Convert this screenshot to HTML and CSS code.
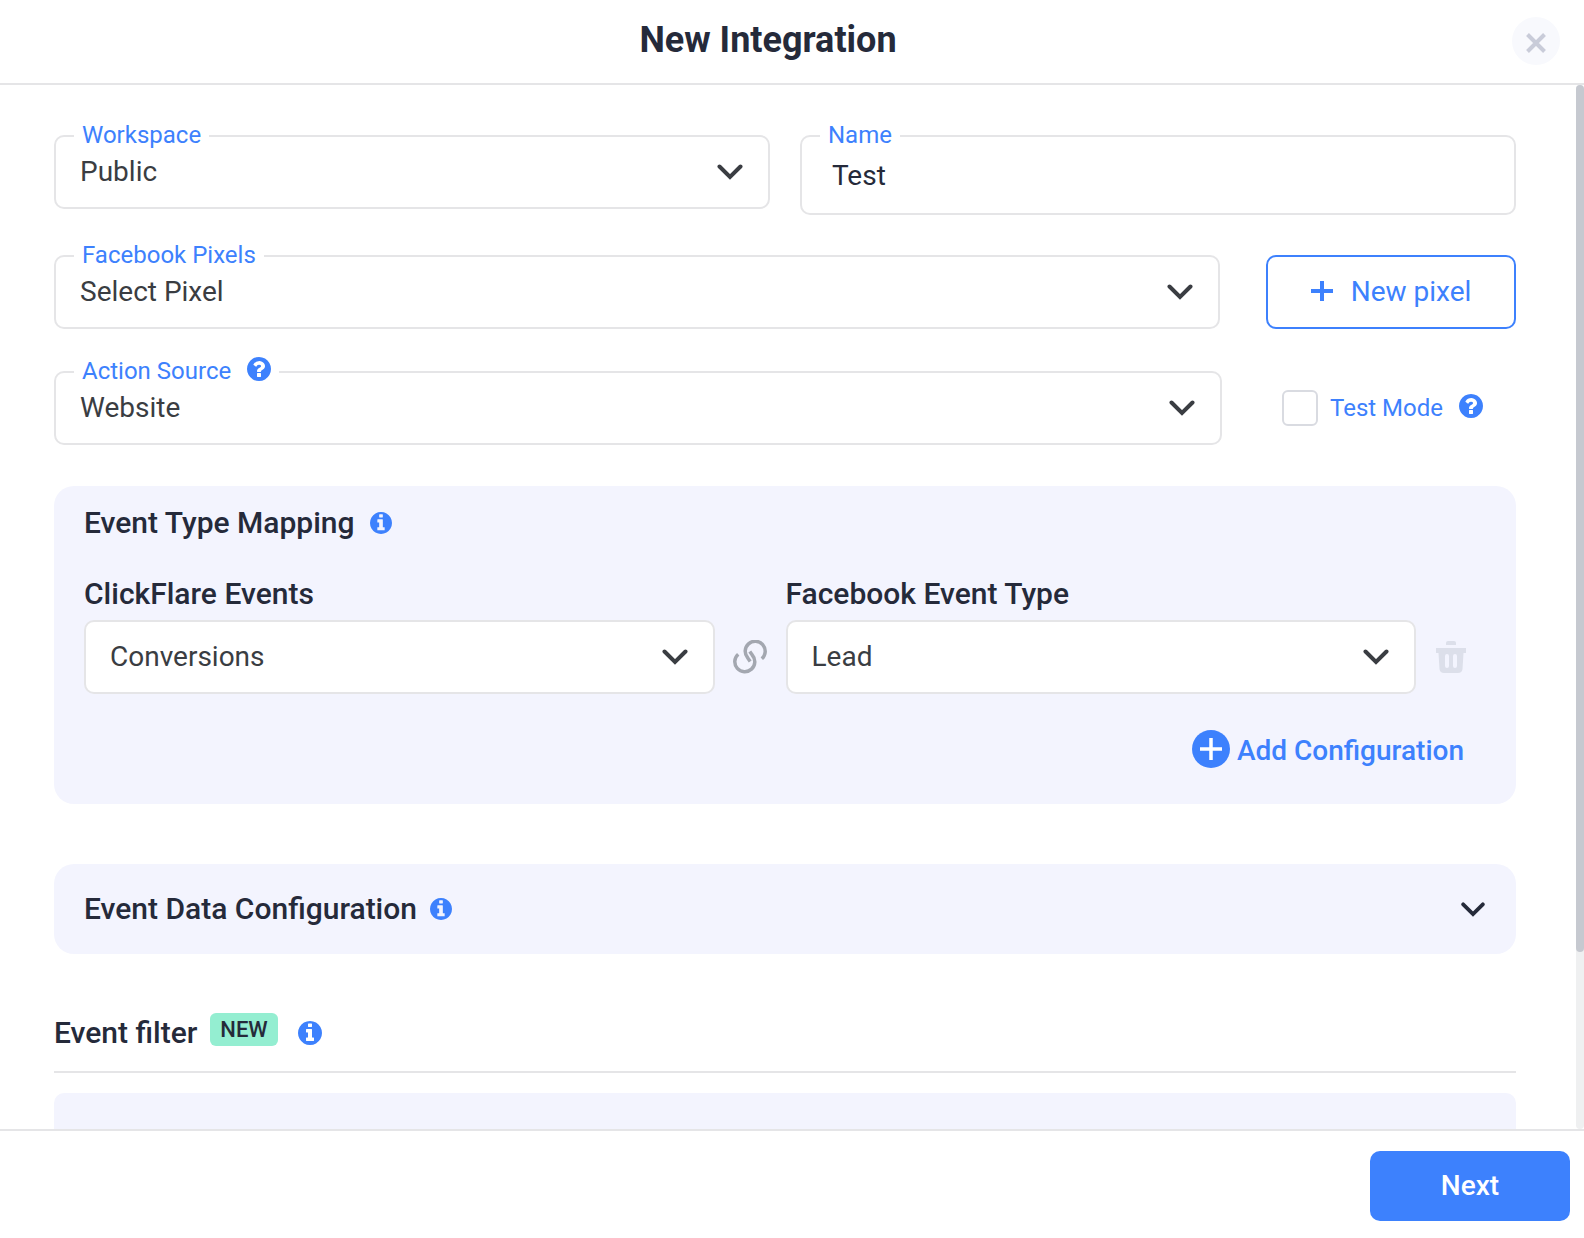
FILE: index.html
```html
<!DOCTYPE html>
<html lang="en">
<head>
<meta charset="utf-8">
<meta name="viewport" content="width=device-width, initial-scale=1">
<title>New Integration</title>
<link rel="stylesheet" href="styles.css">
</head>
<body>
<svg class="sprite" aria-hidden="true">
  <symbol id="chevron" viewBox="0 0 26 16"><path d="M2.500 2.500 13 13 23.500 2.500" fill="none" stroke="currentColor" stroke-width="4" stroke-linecap="round"/></symbol>
  <symbol id="info" viewBox="0 0 1536 1536"><path fill="currentColor" d="M1024 1248v-160q0-14-9-23t-23-9h-96v-512q0-14-9-23t-23-9h-320q-14 0-23 9t-9 23v160q0 14 9 23t23 9h96v320h-96q-14 0-23 9t-9 23v160q0 14 9 23t23 9h448q14 0 23-9t9-23zM896 352v-160q0-14-9-23t-23-9h-192q-14 0-23 9t-9 23v160q0 14 9 23t23 9h192q14 0 23-9t9-23zM1536 768q0 209-103 385.500t-279.500 279.500-385.500 103-385.500-103-279.500-279.500-103-385.500 103-385.500 279.500-279.500 385.500-103 385.500 103 279.500 279.500 103 385.500z"/></symbol>
  <symbol id="question" viewBox="0 0 1536 1536"><path fill="currentColor" d="M896 1248v-192q0-14-9-23t-23-9h-192q-14 0-23 9t-9 23v192q0 14 9 23t23 9h192q14 0 23-9t9-23zM1152 576q0-88-55.500-163t-138.500-116-170-41q-243 0-371 213-15 24 8 42l132 100q7 6 19 6 16 0 25-12 53-68 86-92 34-24 86-24 48 0 85.500 26t37.500 59q0 38-20 61t-68 45q-63 28-115.500 86.500t-52.500 125.500v36q0 14 9 23t23 9h192q14 0 23-9t9-23q0-19 21.500-49.500t54.500-49.500q32-18 49-28.500t46-35 44.500-48 28-60.500 12.500-81zM1536 768q0 209-103 385.500t-279.500 279.500-385.500 103-385.500-103-279.500-279.500-103-385.500 103-385.500 279.500-279.500 385.500-103 385.500 103 279.500 279.500 103 385.500z"/></symbol>
</svg>

<div class="dialog" role="dialog" aria-labelledby="dialog-title">
  <header class="dialog-header">
    <h1 id="dialog-title">New Integration</h1>
    <button class="close" type="button" aria-label="Close">
      <svg width="20" height="20" viewBox="0 0 20 20" aria-hidden="true"><path d="M1.500 1.500 18.500 18.500M18.500 1.500 1.500 18.500" stroke="currentColor" stroke-width="4"/></svg>
    </button>
  </header>

  <div class="dialog-main">
    <form class="dialog-body" id="integration">
      <div class="row row-halves">
        <div class="field">
          <label class="float-label" for="workspace">Workspace</label>
          <select class="control" id="workspace"><option>Public</option></select>
          <svg class="chevron" aria-hidden="true"><use href="#chevron"/></svg>
        </div>
        <div class="field">
          <label class="float-label" for="name">Name</label>
          <input class="control control-text" id="name" type="text" value="Test">
        </div>
      </div>

      <div class="row row-pixel">
        <div class="field">
          <label class="float-label" for="pixel">Facebook Pixels</label>
          <select class="control" id="pixel"><option>Select Pixel</option></select>
          <svg class="chevron" aria-hidden="true"><use href="#chevron"/></svg>
        </div>
        <button class="outline-button" type="button">
          <svg width="22" height="22" viewBox="0 0 22 22" aria-hidden="true"><path d="M11 0V20M0 10H22" stroke="currentColor" stroke-width="4"/></svg>
          New pixel
        </button>
      </div>

      <div class="row row-source">
        <div class="field">
          <label class="float-label" for="source">Action Source <svg class="icon-24 hint" aria-hidden="true"><use href="#question"/></svg></label>
          <select class="control" id="source"><option>Website</option></select>
          <svg class="chevron" aria-hidden="true"><use href="#chevron"/></svg>
        </div>
        <label class="check">
          <input type="checkbox">
          <span>Test Mode</span>
          <svg class="icon-24 hint" aria-hidden="true"><use href="#question"/></svg>
        </label>
      </div>

      <section class="panel mapping">
        <h2>Event Type Mapping <svg class="icon-22" aria-hidden="true"><use href="#info"/></svg></h2>
        <div class="mapping-grid">
          <label class="column-label" for="cf-event">ClickFlare Events</label>
          <label class="column-label column-second" for="fb-event">Facebook Event Type</label>
          <div class="field">
            <select class="control" id="cf-event"><option>Conversions</option></select>
            <svg class="chevron" aria-hidden="true"><use href="#chevron"/></svg>
          </div>
          <svg class="link-icon" viewBox="0 0 34 34" aria-hidden="true"><path d="M28.800 18.800A10 10 0 1 0 14.800 18L17.200 21.500M5.200 14.200A10 10 0 1 0 19.200 15L16.800 11.500" fill="none" stroke="currentColor" stroke-width="3.500"/></svg>
          <div class="field">
            <select class="control" id="fb-event"><option>Lead</option></select>
            <svg class="chevron" aria-hidden="true"><use href="#chevron"/></svg>
          </div>
          <button class="trash" type="button" aria-label="Delete mapping" disabled>
            <svg width="30" height="32" viewBox="0 0 30 32" aria-hidden="true"><path fill="currentColor" fill-rule="evenodd" d="M10 4V2q0-2 2-2h6q2 0 2 2v2zM0 7h30v5h-2.500l-1 16q-.5 4-4.500 4H8q-4 0-4.500-4l-1-16H0zM9 15v10a2 2 0 0 0 4 0V15a2 2 0 0 0-4 0zM17 15v10a2 2 0 0 0 4 0V15a2 2 0 0 0-4 0z"/></svg>
          </button>
        </div>
        <button class="add" type="button">
          <svg width="38" height="38" viewBox="0 0 38 38" aria-hidden="true"><circle cx="19" cy="19" r="19" fill="currentColor"/><path d="M19 8V30M8 19H30" stroke="#fff" stroke-width="3.500"/></svg>
          Add Configuration
        </button>
      </section>

      <section class="panel collapsed">
        <h2>Event Data Configuration <svg class="icon-22" aria-hidden="true"><use href="#info"/></svg></h2>
        <button class="expand" type="button" aria-label="Expand event data configuration"><svg class="chevron-plain" aria-hidden="true"><use href="#chevron"/></svg></button>
      </section>

      <section class="filter">
        <h2 class="filter-title">Event filter <span class="badge">NEW</span> <svg class="icon-24" aria-hidden="true"><use href="#info"/></svg></h2>
        <div class="filter-panel"></div>
      </section>
    </form>
    <div class="scroll-track" aria-hidden="true"><div class="scroll-thumb"></div></div>
  </div>

  <footer class="dialog-footer">
    <button class="primary" type="submit" form="integration">Next</button>
  </footer>
</div>
</body>
</html>
```
FILE: styles.css
```css
:root {
  --blue: #3d81fd;
  --ink: #252a3a;
  --text: #3a3d42;
  --line: #e5e5e7;
  --panel: #f3f4fe;
}

* { box-sizing: border-box; }

body {
  margin: 0;
  background: #fff;
  color: var(--ink);
  font: 400 28px/32px Roboto, "Liberation Sans", sans-serif;
}

button, input, select { font: inherit; color: inherit; }
button { border: 0; padding: 0; background: none; cursor: pointer; }
h1, h2 { margin: 0; }
svg { flex: none; }

.sprite { display: none; }
.icon-22 { width: 22px; height: 22px; color: var(--blue); }
.icon-24 { width: 24px; height: 24px; color: var(--blue); }
.hint { margin-bottom: 4px; }

.dialog { display: flex; flex-direction: column; height: 100vh; }

.dialog-header {
  display: grid;
  grid-template-columns: 1fr 48px;
  padding: 17px 24px 18px 0;
  border-bottom: 2px solid var(--line);
}
.dialog-header h1 {
  padding-left: 24px;
  font-size: 36px;
  line-height: 46px;
  font-weight: 700;
  text-align: center;
}
.close {
  display: grid;
  place-items: center;
  width: 48px;
  height: 48px;
  padding-top: 4px;
  border-radius: 50%;
  background: #f8f9fd;
  color: #c9ccd9;
}

.dialog-main { flex: 1; display: flex; min-height: 0; }
.dialog-body {
  flex: 1;
  min-width: 0;
  overflow-y: auto;
  scrollbar-width: none;
  padding: 50px 60px 50px 54px;
}
.scroll-track { width: 8px; border-radius: 8px; background: #eff0f1; }
.scroll-thumb { height: 83%; border-radius: 8px; background: #c6c9d0; }

.row { display: grid; }
.row-halves { grid-template-columns: 1fr 1fr; gap: 30px; align-items: start; }
.row-pixel { grid-template-columns: 1fr 250px; gap: 46px; margin-top: 40px; }
.row-source { grid-template-columns: 1fr 234px; gap: 60px; margin-top: 42px; align-items: center; }

.field { position: relative; display: grid; align-items: center; }
.field > .control, .field > .chevron { grid-area: 1 / 1; }
.control {
  appearance: none;
  width: 100%;
  height: 74px;
  margin: 0;
  padding: 0 64px 0 24px;
  border: 2px solid var(--line);
  border-radius: 10px;
  background: #fff;
  color: var(--text);
}
.control-text { height: 80px; padding: 0 30px; color: var(--ink); }
.chevron {
  justify-self: end;
  width: 26px;
  height: 16px;
  margin-right: 27px;
  color: var(--text);
  pointer-events: none;
}
.float-label {
  position: absolute;
  top: -16px;
  left: 20px;
  display: flex;
  align-items: center;
  gap: 16px;
  padding: 0 8px;
  background: #fff;
  color: var(--blue);
  font-size: 24px;
  line-height: 32px;
}

.outline-button {
  display: flex;
  align-items: center;
  justify-content: center;
  gap: 18px;
  border: 2px solid var(--blue);
  border-radius: 10px;
  color: var(--blue);
}

.check {
  display: flex;
  align-items: center;
  color: var(--blue);
  font-size: 24px;
}
.check input {
  appearance: none;
  width: 36px;
  height: 36px;
  margin: 0 12px 0 0;
  border: 2px solid #d9dbe1;
  border-radius: 6px;
  background: #fff;
}
.check span { margin-right: 16px; }

.panel { border-radius: 20px; background: var(--panel); padding: 0 30px; }
h2, .column-label { font-size: 30px; line-height: 36px; font-weight: 500; }
h2 { display: flex; align-items: center; gap: 15px; }

.mapping { margin-top: 41px; padding-top: 19px; padding-bottom: 32px; }
.mapping-grid {
  display: grid;
  grid-template-columns: 1fr 71px 1fr 70px;
  row-gap: 8px;
  align-items: center;
  margin-top: 35px;
}
.column-second { grid-column: 3 / 5; }
.link-icon { justify-self: center; width: 34px; height: 34px; color: #a3a7b0; }
.trash { display: grid; justify-self: center; color: #dcdfea; }
.add {
  display: flex;
  align-items: flex-start;
  gap: 7px;
  margin: 36px 22px 0 auto;
  color: var(--blue);
  font-weight: 500;
  line-height: 42px;
}

.collapsed {
  display: flex;
  align-items: center;
  justify-content: space-between;
  min-height: 90px;
  margin-top: 60px;
}
.collapsed h2 { gap: 13px; line-height: 38px; }
.expand { display: grid; }
.chevron-plain { width: 26px; height: 15px; }

.filter-title {
  align-items: flex-start;
  gap: 13px;
  margin-top: 59px;
  padding-bottom: 18px;
  border-bottom: 2px solid var(--line);
  line-height: 40px;
}
.filter-title .icon-24 { align-self: center; margin-left: 7px; }
.badge {
  padding: 0 10px;
  border-radius: 6px;
  background: #94eed1;
  font-size: 22px;
  line-height: 33px;
}
.filter-panel { height: 120px; margin-top: 20px; border-radius: 10px; background: var(--panel); }

.dialog-footer {
  display: flex;
  justify-content: flex-end;
  padding: 20px 14px 17px;
  border-top: 2px solid var(--line);
}
.primary {
  width: 200px;
  height: 70px;
  border-radius: 10px;
  background: var(--blue);
  color: #fff;
  font-weight: 500;
}
```
